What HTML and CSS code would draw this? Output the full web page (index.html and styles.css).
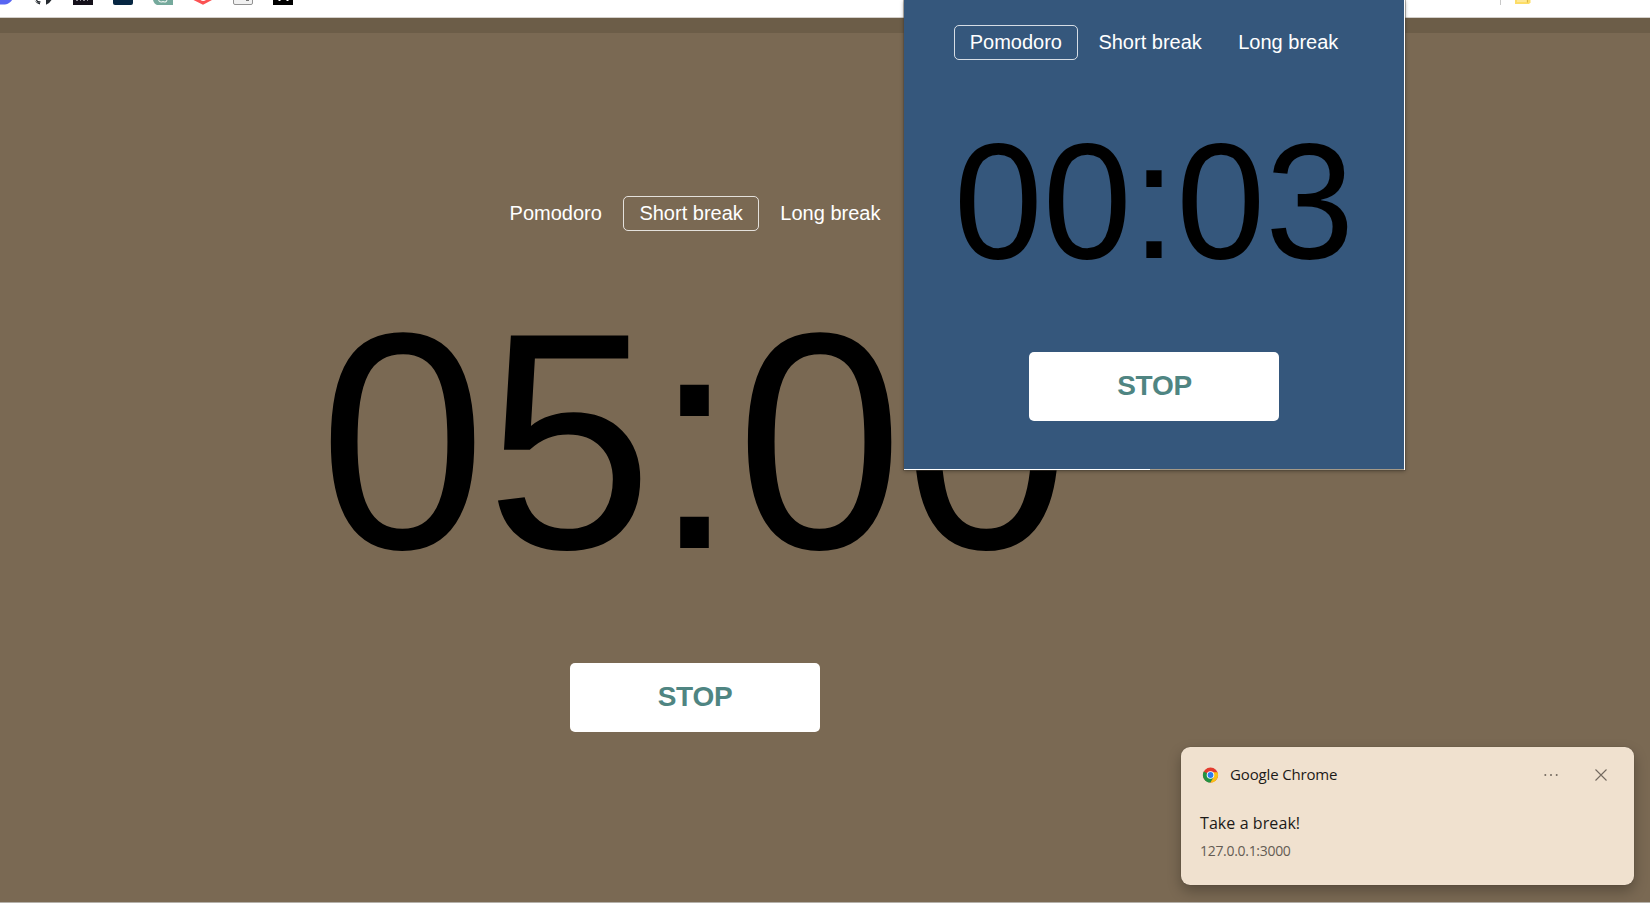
FILE: index.html
```html
<!DOCTYPE html>
<html lang="en">
<head>
<meta charset="utf-8">
<title>Pomodoro</title>
<link rel="stylesheet" href="styles.css">
</head>
<body>
<header class="bookmarks">
  <svg class="bookmark-icons" width="300" height="5" viewBox="0 0 300 5">
    <path d="M-8 0H12C11 2 8 4.6 3 4.6H-8z" fill="#5865f2"/>
    <path d="M34.5 0L36.5 2.2L40 2.4V4.5Q36 3.5 34.5 0zM46 0H51.5Q50 3 46 4.7z" fill="#24292f"/>
    <path d="M36.5 0Q37 2 40.5 1.8" fill="none" stroke="#24292f" stroke-width="1.2"/>
    <path d="M73 0H93V5H73z" fill="#14101a"/>
    <path d="M76 .5H78M80 .5H81M83 .5H85M87 .5H88" stroke="#8d8a92"/>
    <path d="M113 0H133V3Q133 5 131 5H115Q113 5 113 3z" fill="#062642"/>
    <path d="M153 0H173V5H157Q154 4 153 0z" fill="#75a99c"/>
    <path d="M158.500 0Q160 3 163 1.500Q166 3 167 0" fill="none" stroke="#e9f3ef" stroke-width="1.1"/>
    <path d="M193.500 0H212L203 4.800z" fill="#fb5152"/>
    <path d="M200.500 0Q203 2 206 0z" fill="#fff"/>
    <path d="M233.500 0V3Q233.500 4.500 235 4.500H251Q252.500 4.500 252.500 3V0" fill="#f1f1f1" stroke="#929292"/>
    <path d="M246 .5H249" stroke="#777"/>
    <path d="M273 0H293V5H273z" fill="#000"/>
    <path d="M279.500 0V1M287.500 0V1" stroke="#fff" stroke-width="2"/>
  </svg>
  <svg class="bookmark-folder" width="40" height="5" viewBox="0 0 40 5">
    <path d="M.5 0V5" stroke="#c8c8c8"/>
    <path d="M15 0H30.500V2.500L29 4H15z" fill="#fddd67"/>
    <path d="M17 0H26.500V2H17z" fill="#fee896"/>
    <path d="M27.500 0V2.500" stroke="#d9b64a"/>
  </svg>
</header>
<div class="strip"></div>
<main class="page">
  <section class="timer timer-large">
    <nav class="tabs">
      <button class="tab">Pomodoro</button>
      <button class="tab tab-active">Short break</button>
      <button class="tab">Long break</button>
    </nav>
    <div class="clock">05:00</div>
    <button class="stop">STOP</button>
  </section>
</main>
<section class="popup">
  <div class="timer timer-small">
    <nav class="tabs">
      <button class="tab tab-active">Pomodoro</button>
      <button class="tab">Short break</button>
      <button class="tab">Long break</button>
    </nav>
    <div class="clock">00:03</div>
    <button class="stop">STOP</button>
  </div>
  <div class="progress"><div class="progress-fill"></div></div>
</section>
<aside class="toast">
  <div class="toast-head">
    <svg class="chrome" width="17" height="16" viewBox="-.5 0 17 16">
      <circle cx="8" cy="8" r="7.600" fill="#e33b2e"/>
      <path d="M8 8L1.200 4.600A7.600 7.600 0 0 0 8 15.600L11.250 9.880z" fill="#229342"/>
      <path d="M8 5.200H15.060A7.600 7.600 0 0 1 8 15.600L11.250 9.880z" fill="#fbc116"/>
      <circle cx="8" cy="8" r="3.800" fill="#fff"/>
      <circle cx="8" cy="8" r="2.900" fill="#2b7cf0"/>
    </svg>
    <span class="toast-app">Google Chrome</span>
    <svg class="dots" width="16" height="4" viewBox="0 0 16 4" fill="#73695f">
      <circle cx="2.300" cy="2" r="1"/><circle cx="8" cy="2" r="1"/><circle cx="13.700" cy="2" r="1"/>
    </svg>
    <svg class="close" width="12" height="12" viewBox="0 0 12 12"><path d="M.5 .5L11.500 11.500M11.500 .5L.5 11.500" stroke="#73695f" stroke-width="1.100"/></svg>
  </div>
  <div class="toast-title">Take a break!</div>
  <div class="toast-source">127.0.0.1:3000</div>
</aside>
</body>
</html>
```
FILE: styles.css
```css
* { box-sizing: border-box; }
body {
  margin: 0;
  height: 903px;
  display: flex;
  flex-direction: column;
  overflow: hidden;
  position: relative;
  background: #fff;
  font-family: "Liberation Sans", Arial, sans-serif;
}
.bookmarks {
  flex: none;
  height: 18px;
  display: flex;
  align-items: flex-start;
  justify-content: space-between;
  padding-right: 110px;
  border-bottom: 1px solid #d3cfca;
}
.strip { flex: none; height: 15px; background: #6c5d48; }
.page {
  flex: none;
  height: 870px;
  background: #7a6953;
  border-bottom: 1px solid #b5b1aa;
}
.timer { display: flex; flex-direction: column; align-items: center; }
.timer-large { width: 1389px; padding-top: 163px; }
.timer-small { width: 500px; height: 469px; padding-top: 25px; background: #35577c; }
.tabs { display: flex; gap: 5.56px; }
.timer-large .tabs { margin-left: 1px; }
.timer-small .tabs { gap: 4.45px; }
.tab {
  height: 35px;
  padding: 0 15px 1px;
  border: 1px solid transparent;
  border-radius: 5px;
  background: none;
  color: #fff;
  font: 20px/23px "Liberation Sans", Arial, sans-serif;
  white-space: nowrap;
}
.tab-active { border-color: rgba(255, 255, 255, .8); }
.clock {
  color: #000;
  line-height: 1;
  white-space: nowrap;
  transform: scaleY(1.03);
  transform-origin: 50% 84.65%;
}
.timer-large .clock { margin-top: 63px; font-size: 300px; }
.timer-small .clock { margin-top: 63px; font-size: 160px; }
.stop {
  width: 250px;
  height: 69px;
  padding: 0 0 1px 1px;
  border: 0;
  border-radius: 5px;
  background: #fff;
  color: #4f8582;
  font: bold 28px/32px "Liberation Sans", Arial, sans-serif;
  letter-spacing: -.3px;
}
.timer-large .stop { margin-top: 69px; }
.timer-small .stop { margin-top: 69px; }
.popup {
  position: absolute;
  top: 0;
  left: 904px;
  width: 501px;
  border-right: 1px solid #fff;
  box-shadow: 0 0 0 1px rgba(80, 70, 58, .4), 0 1px 4px rgba(0, 0, 0, .4);
}
.progress { height: 1px; background: #a49987; }
.progress-fill { width: 246px; height: 1px; background: #fff; }
.toast {
  position: absolute;
  left: 1181px;
  top: 747px;
  width: 453px;
  height: 138px;
  padding: 18px 27px 0 19px;
  border-radius: 9px;
  background: #f0e1cf;
  box-shadow: 0 0 1px rgba(0, 0, 0, .4), 0 6px 14px rgba(0, 0, 0, .28);
  font-family: "Open Sans", "Noto Sans", sans-serif;
  color: #1c1a18;
}
.toast-head { display: flex; align-items: center; height: 20px; padding-left: 2px; }
.toast-app { margin: -2px 0 0 11px; font-size: 15px; line-height: 20px; letter-spacing: -.15px; }
.dots { margin-left: auto; }
.close { margin-left: 36px; }
.toast-title { margin-top: 26px; font-size: 16px; line-height: 24px; letter-spacing: .08px; }
.toast-source { margin-top: 6px; font-size: 14px; line-height: 20px; letter-spacing: -.3px; color: #645c54; }
```
